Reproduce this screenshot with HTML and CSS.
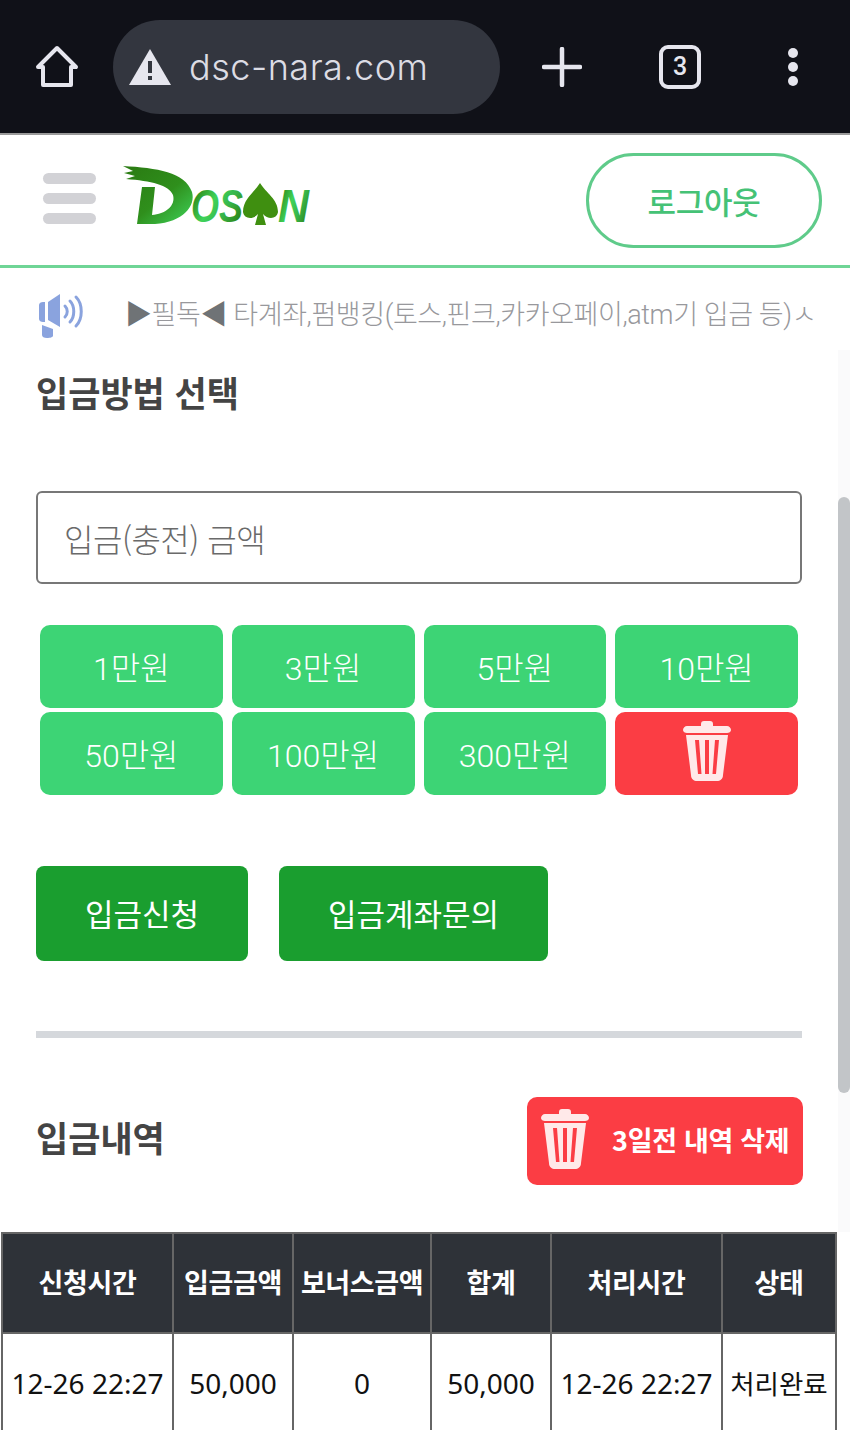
FILE: index.html
```html
<!DOCTYPE html>
<html lang="ko">
<head>
  <meta charset="UTF-8">
  <title>입금</title>
  <meta name="viewport" content="width=device-width, initial-scale=1.0">
  <link rel="stylesheet" href="styles.css">
</head>
<body>

<div class="browser-bar">
  <svg class="home-icon" width="46" height="46" viewBox="0 0 46 46"><path d="M23 4 L42 23 H37 V41 H9 V23 H4 Z" fill="none" stroke="#e6e6ee" stroke-width="4" stroke-linejoin="round"/></svg>
  <div class="url-box">
    <svg width="44" height="38" viewBox="0 0 44 38"><path d="M22 1 L43 37 H1 Z" fill="#e6e6ee"/><rect x="20" y="13" width="4" height="12" fill="#33363f"/><rect x="20" y="28" width="4" height="4" fill="#33363f"/></svg>
    <span class="url-text">dsc-nara.com</span>
  </div>
  <svg class="plus-icon" width="40" height="40" viewBox="0 0 40 40"><path d="M20 2 V38 M2 20 H38" stroke="#e6e6ee" stroke-width="4.5" stroke-linecap="round"/></svg>
  <div class="tab-count">3</div>
  <svg class="more-icon" width="12" height="40" viewBox="0 0 12 40"><circle cx="6" cy="6" r="5" fill="#e6e6ee"/><circle cx="6" cy="20" r="5" fill="#e6e6ee"/><circle cx="6" cy="34" r="5" fill="#e6e6ee"/></svg>
</div>

<header class="site-header">
  <div class="burger"><span></span><span></span><span></span></div>
  <svg class="logo" width="190" height="76" viewBox="0 0 190 76">
    <defs>
      <linearGradient id="logoGreen" x1="0" y1="0" x2="1" y2="0.6">
        <stop offset="0" stop-color="#2a7210"/>
        <stop offset="0.2" stop-color="#2f8f20"/>
        <stop offset="0.5" stop-color="#3fd35a"/>
        <stop offset="0.75" stop-color="#37b54a"/>
        <stop offset="1" stop-color="#2f8a1a"/>
      </linearGradient>
      <linearGradient id="logoBrush" x1="0" y1="0" x2="1" y2="1">
        <stop offset="0" stop-color="#2a7a12"/>
        <stop offset="0.55" stop-color="#2f8f1c"/>
        <stop offset="1" stop-color="#3fd35a"/>
      </linearGradient>
    </defs>
    <path d="M0 2 C34 4 62 8 69 28 C73 42 60 58 32 60 L14 60 L19 23 L32 23 L29 51 C42 50 53 42 50 31 C46 21 28 17 3 15 L12 12 L1 9 L10 7 Z" fill="url(#logoBrush)"/>
    <text x="68" y="58" class="logo-text" textLength="52" lengthAdjust="spacingAndGlyphs" fill="url(#logoGreen)">OS</text>
    <path d="M137 19 C143 29 155 35 155 48 C154 55 145 56 140 50 L143 61 H132 L135 50 C130 56 121 55 120 48 C120 35 131 29 137 19 Z" fill="#3f8f10"/>
    <text x="155" y="58" class="logo-text" textLength="31" lengthAdjust="spacingAndGlyphs" fill="url(#logoGreen)">N</text>
  </svg>
  <button class="logout-btn">로그아웃</button>
</header>

<div class="notice">
  <svg class="speaker" width="48" height="44" viewBox="0 0 48 44">
    <path d="M3 11 C3 9 5 8 7 8 H9 V28 H7 C5 28 3 27 3 25 Z M12 8 L24 0 V33 L12 26 Z M6 31 L17 35 V42 C17 43 14 44 11 44 C8 44 6 43 6 41 Z" fill="#8aa3de"/>
    <path d="M29 12 C32 15 32 20 29 23 M34 7 C39 12 39 23 34 28 M40 3 C47 10 47 25 40 32" fill="none" stroke="#8aa3de" stroke-width="3" stroke-linecap="round"/>
  </svg>
  <div class="notice-text"><span class="mark">▶</span>필독<span class="mark">◀</span> 타계좌,펌뱅킹(토스,핀크,카카오페이,atm기 입금 등)ㅅ</div>
</div>

<div class="page">
  <main class="content">
    <h2 class="section-title">입금방법 선택</h2>
    <div class="amount-input">입금(충전) 금액</div>

    <div class="amount-grid">
      <button class="amount-btn">1만원</button>
      <button class="amount-btn">3만원</button>
      <button class="amount-btn">5만원</button>
      <button class="amount-btn">10만원</button>
      <button class="amount-btn">50만원</button>
      <button class="amount-btn">100만원</button>
      <button class="amount-btn">300만원</button>
      <button class="amount-btn clear-btn">
        <svg class="trash-icon" width="48" height="60" viewBox="0 0 48 60"><use href="#trash"/></svg>
      </button>
    </div>

    <div class="action-row">
      <button class="action-btn wide-a">입금신청</button>
      <button class="action-btn wide-b">입금계좌문의</button>
    </div>

    <div class="divider"></div>

    <div class="history-head">
      <h2 class="section-title">입금내역</h2>
      <button class="delete-old">
        <svg class="trash-icon" width="48" height="60" viewBox="0 0 48 60"><use href="#trash"/></svg>
        <span>3일전 내역 삭제</span>
      </button>
    </div>
  </main>
  <div class="scrollbar"><div class="thumb"></div></div>
</div>

<table class="history">
  <colgroup>
    <col class="col-time"><col class="col-money"><col class="col-bonus"><col class="col-sum"><col class="col-time"><col class="col-state">
  </colgroup>
  <tr>
    <th>신청시간</th><th>입금금액</th><th>보너스금액</th><th>합계</th><th>처리시간</th><th>상태</th>
  </tr>
  <tr>
    <td>12-26 22:27</td><td>50,000</td><td>0</td><td>50,000</td><td>12-26 22:27</td><td class="state">처리완료</td>
  </tr>
</table>

<svg class="sprite" width="0" height="0">
  <symbol id="trash" viewBox="0 0 48 60">
    <path d="M18 3 C18 1 19 0 21 0 H27 C29 0 30 1 30 3 V5 H44 C46 5 48 7 48 9 C48 11 46 12 44 12 H4 C2 12 0 11 0 9 C0 7 2 5 4 5 H18 Z" fill="#ffe9e9"/>
    <path d="M3 14 H45 L40 54 C40 58 37 60 34 60 H14 C11 60 8 58 8 54 Z M12 19 L15 53 H18.5 L16 19 Z M22 19 V53 H26 V19 Z M32 19 L29.5 53 H33 L36 19 Z" fill="#ffe9e9" fill-rule="evenodd"/>
  </symbol>
</svg>

</body>
</html>
```

FILE: styles.css
```css
html, body { margin: 0; padding: 0; }
body { width: 850px; height: 1430px; overflow: hidden; background: #fff; font-family: "Noto Sans CJK KR", "Noto Sans", sans-serif; position: relative; }
button { font-family: inherit; border: none; padding: 0; }

.browser-bar { height: 133px; background: #101118; border-bottom: 2px solid #9a9a9a; display: flex; align-items: center; padding-left: 34px; }
.home-icon { margin-right: 33px; }
.url-box { width: 387px; height: 94px; border-radius: 47px; background: #33363f; display: flex; align-items: center; padding-left: 15px; box-sizing: border-box; gap: 17px; }
.url-text { color: #dcdce4; font-family: "Inter", "Noto Sans", sans-serif; font-size: 36px; font-weight: 300; letter-spacing: 0.5px; }
.plus-icon { margin-left: 42px; }
.tab-count { width: 34px; height: 36px; margin-left: 77px; border: 4px solid #e6e6ee; border-radius: 9px; color: #e6e6ee; font-family: "Roboto", sans-serif; font-size: 25px; font-weight: 500; display: flex; align-items: center; justify-content: center; }
.more-icon { margin-left: 86px; }

.site-header { height: 133px; box-sizing: border-box; border-bottom: 3px solid #6fd596; display: flex; align-items: center; padding: 0 28px 0 43px; }
.burger { width: 53px; margin-top: -3px; display: flex; flex-direction: column; gap: 9px; }
.burger span { height: 11px; border-radius: 6px; background: #d2d2d6; }
.logo { align-self: flex-start; margin: 29px 0 0 27px; }
.logo-text { font-family: "Liberation Sans", sans-serif; font-size: 47px; font-weight: bold; font-style: italic; }
.logout-btn { margin-left: auto; width: 236px; height: 95px; border: 3px solid #5fcb8a; border-radius: 48px; background: #fff; color: #45c276; font-size: 31px; font-weight: 500; letter-spacing: -0.3px; }

.notice { height: 82px; display: flex; align-items: center; padding-left: 36px; }
.speaker { flex: none; margin-top: 14px; }
.notice-text { margin: 6px 0 0 41px; white-space: nowrap; color: #98989c; font-family: "Roboto", "Noto Sans CJK KR", sans-serif; font-size: 27px; font-weight: 300; letter-spacing: -0.4px; }
.mark { color: #6f7376; }

.page { display: flex; height: 882px; }
.content { width: 766px; padding: 0 36px; flex: none; background: #fff; }
.scrollbar { width: 12px; margin-left: auto; background: #fafafb; }
.thumb { width: 12px; height: 596px; margin-top: 147px; border-radius: 6px; background: #c2c5c8; }

.section-title { margin: 0; color: #444; font-size: 35px; font-weight: 700; line-height: 52px; }
.content > .section-title { margin-top: 16px; }

.amount-input { margin-top: 73px; height: 93px; border: 2px solid #777; border-radius: 6px; box-sizing: border-box; padding-left: 26px; display: flex; align-items: center; color: #6a6a6a; font-size: 32px; font-weight: 300; letter-spacing: -0.5px; }

.amount-grid { margin: 41px 4px 0; display: grid; grid-template-columns: repeat(4, 182.75px); grid-auto-rows: 83px; column-gap: 9px; row-gap: 4px; }
.amount-btn { background: #3dd475; color: #fff; border-radius: 10px; font-family: "Roboto", "Noto Sans CJK KR", sans-serif; font-size: 32px; font-weight: 300; padding-bottom: 2px; display: flex; align-items: center; justify-content: center; }
.clear-btn { background: #fb3d44; padding-bottom: 5px; }

.action-row { margin-top: 71px; display: flex; gap: 31px; }
.action-btn { height: 95px; background: #1a9e2f; color: #fff; border-radius: 8px; font-size: 31px; font-weight: 400; padding-bottom: 2px; }
.wide-a { width: 212px; }
.wide-b { width: 269px; }

.divider { margin-top: 70px; height: 7px; background: #d5d8dc; }

.history-head { margin-top: 59px; height: 88px; display: flex; align-items: center; justify-content: space-between; }
.history-head .section-title { padding-bottom: 8px; }
.delete-old { width: 276px; height: 88px; margin-right: -1px; border-radius: 10px; background: #fb3d44; color: #fff; font-size: 27px; font-weight: 700; display: flex; align-items: center; padding-left: 14px; box-sizing: border-box; letter-spacing: -0.3px; }
.delete-old .trash-icon { margin-bottom: 4px; }
.delete-old span { margin-left: 23px; padding-bottom: 4px; }

.history { position: absolute; left: 1px; top: 1232px; width: 836px; table-layout: fixed; border-collapse: collapse; }
.col-time { width: 171px; }
.col-money { width: 120px; }
.col-bonus { width: 138px; }
.col-sum { width: 120px; }
.col-state { width: 114px; }
.history th, .history td { border: 2px solid #666; text-align: center; padding: 0 0 3px; white-space: nowrap; }
.history th { height: 95px; background: #2e3238; color: #fff; font-size: 27px; font-weight: 700; letter-spacing: -0.4px; }
.history td { height: 97px; background: #fff; color: #111; font-family: "Noto Sans", "Noto Sans CJK KR", sans-serif; font-size: 28px; font-weight: 400; }
.history td.state { font-family: "Noto Sans CJK KR", sans-serif; font-size: 26.5px; }
.sprite { position: absolute; }
```
